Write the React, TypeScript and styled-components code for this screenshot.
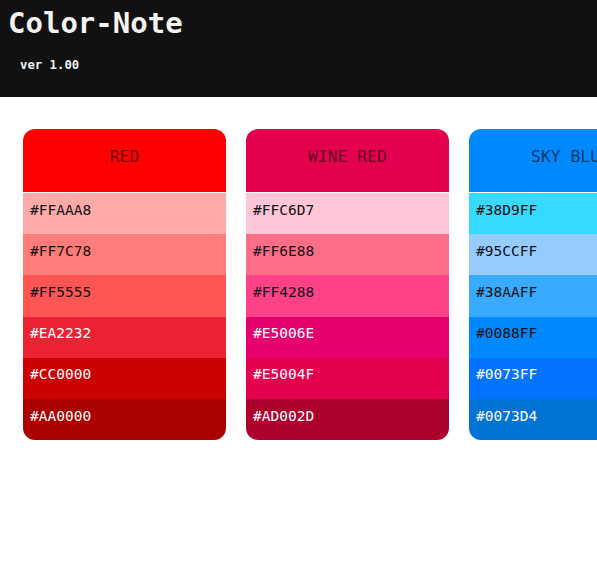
import React from 'react'
import styled, { createGlobalStyle } from 'styled-components'

interface Palette {
  name: string
  head: string
  shades: string[]
  lightCount: number
}

const palettes: Palette[] = [
  {
    name: 'RED',
    head: '#FF0000',
    shades: ['#FFAAA8', '#FF7C78', '#FF5555', '#EA2232', '#CC0000', '#AA0000'],
    lightCount: 3
  },
  {
    name: 'WINE RED',
    head: '#E5004F',
    shades: ['#FFC6D7', '#FF6E88', '#FF4288', '#E5006E', '#E5004F', '#AD002D'],
    lightCount: 3
  },
  {
    name: 'SKY BLUE',
    head: '#0088FF',
    shades: ['#38D9FF', '#95CCFF', '#38AAFF', '#0088FF', '#0073FF', '#0073D4'],
    lightCount: 4
  }
]

const GlobalStyle = createGlobalStyle`
  body {
    margin: 0;
    background: #fff;
    font-family: "DejaVu Sans Mono", "Liberation Mono", monospace;
    overflow: hidden;
  }
`

const Header = styled.header`
  height: 97px;
  background: #111111;
  color: #f4f4f4;
  box-sizing: border-box;
  padding: 6px 8px 0;
`

const Title = styled.h1`
  margin: 0;
  font-size: 29px;
  font-weight: bold;
  line-height: 34px;
`

const Version = styled.div`
  margin: 18px 0 0 12px;
  font-size: 12.3px;
  font-weight: bold;
`

const Board = styled.main`
  display: flex;
  gap: 20px;
  padding: 32px 23px;
  overflow: hidden;
`

const Card = styled.section`
  flex: 0 0 203px;
  border-radius: 12px;
  overflow: hidden;
  display: flex;
  flex-direction: column;
`

const CardHead = styled.div<{ $bg: string }>`
  height: 64px;
  background: ${(p) => p.$bg};
  border-bottom: 1px solid #fff;
  box-sizing: border-box;
  padding-bottom: 8px;
  display: flex;
  align-items: center;
  justify-content: center;
  font-size: 16.4px;
  color: rgba(0, 0, 0, 0.62);
`

const Shade = styled.div<{ $bg: string; $light: boolean }>`
  height: 41.2px;
  background: ${(p) => p.$bg};
  color: ${(p) => (p.$light ? '#111' : '#fff')};
  font-size: 14.5px;
  display: flex;
  align-items: center;
  padding: 0 7px 8px;
  box-sizing: border-box;
`

export default function App() {
  return (
    <>
      <GlobalStyle />
      <Header>
        <Title>Color-Note</Title>
        <Version>ver 1.00</Version>
      </Header>
      <Board>
        {palettes.map((p) => (
          <Card key={p.name}>
            <CardHead $bg={p.head}>{p.name}</CardHead>
            {p.shades.map((s, i) => (
              <Shade key={s} $bg={s} $light={i < p.lightCount}>
                {s}
              </Shade>
            ))}
          </Card>
        ))}
      </Board>
    </>
  )
}
